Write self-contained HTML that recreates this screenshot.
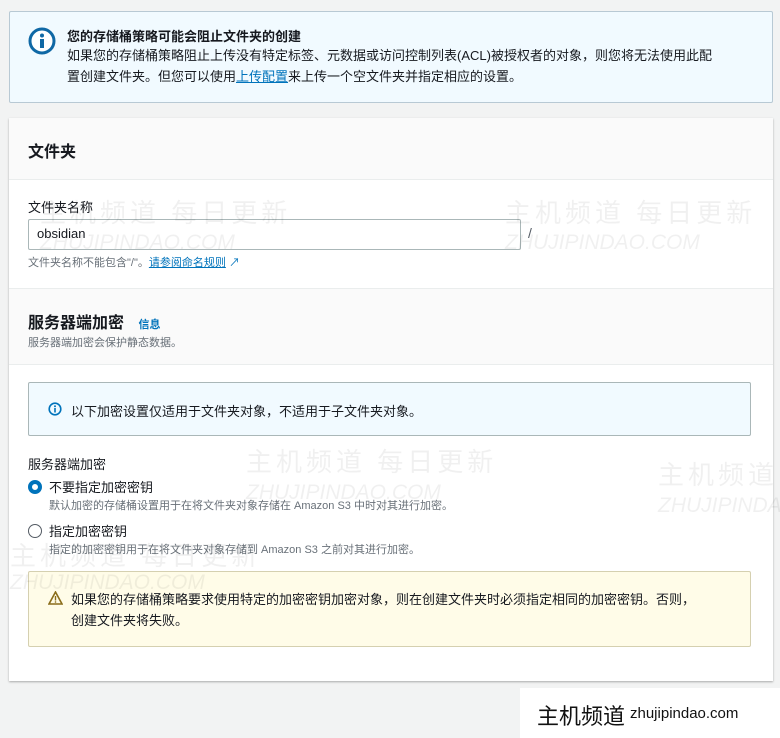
<!DOCTYPE html>
<html><head><meta charset="utf-8"><style>
*{box-sizing:border-box;margin:0;padding:0}
body{width:780px;height:738px;background:#f2f3f3;font-family:"Liberation Sans","Noto Sans CJK SC",sans-serif;color:#16191f;position:relative;overflow:hidden;font-size:13px}
.abs{position:absolute}
.info{left:9px;top:11px;width:764px;height:92px;background:#f1faff;border:1px solid #b8c9d4;border-radius:2px}
.card{left:9px;top:118px;width:764px;height:563px;background:#fff;box-shadow:0 1px 2px rgba(0,0,0,.3)}
.hd{position:absolute;left:0;width:764px;background:#fafafa;border-bottom:1px solid #eaeded}
a{color:#0073bb;text-decoration:underline}
.wm{position:absolute;color:rgba(0,0,0,.06);font-size:26px;letter-spacing:4px;white-space:nowrap}
.wm2{position:absolute;color:rgba(0,0,0,.06);font-style:italic;font-size:21px;white-space:nowrap}
</style></head><body>
<div class="abs info">
 <svg class="abs" style="left:17px;top:14px" width="30" height="30" viewBox="0 0 30 30"><circle cx="15" cy="15" r="12" fill="#fff" stroke="#0f68a5" stroke-width="3"/><circle cx="15" cy="9.5" r="2" fill="#0f68a5"/><rect x="13" y="13" width="4" height="9" fill="#0f68a5"/></svg>
 <div class="abs" style="left:57px;top:14px;font-weight:bold;font-size:13px">您的存储桶策略可能会阻止文件夹的创建</div>
 <div class="abs" style="left:57px;top:33px;width:654px;font-size:13px;line-height:21px">如果您的存储桶策略阻止上传没有特定标签、元数据或访问控制列表(ACL)被授权者的对象，则您将无法使用此配置创建文件夹。但您可以使用<a>上传配置</a>来上传一个空文件夹并指定相应的设置。</div>
</div>
<div class="abs card">
 <div class="hd" style="top:0;height:62px"><div class="abs" style="left:19px;top:20px;font-size:16px;font-weight:bold">文件夹</div></div>
 <div class="abs" style="left:19px;top:79px;font-size:13px">文件夹名称</div>
 <div class="abs" style="left:19px;top:101px;width:493px;height:31px;border:1px solid #aab7b8;border-radius:2px;padding:6px 8px;font-size:13px">obsidian</div>
 <div class="abs" style="left:519px;top:107px;font-size:14px;color:#545b64">/</div>
 <div class="abs" style="left:19px;top:136px;font-size:11px;color:#687078">文件夹名称不能包含"/"。<a>请参阅命名规则</a> <span style="color:#0073bb">&#x2197;</span></div>
 <div class="hd" style="top:170px;height:77px;border-top:1px solid #eaeded"><div class="abs" style="left:19px;top:20px;font-size:16px;font-weight:bold">服务器端加密 <span style="font-size:11px;color:#0073bb;margin-left:10px">信息</span></div><div class="abs" style="left:19px;top:45px;font-size:11px;color:#687078">服务器端加密会保护静态数据。</div></div>
 <div class="abs" style="left:19px;top:264px;width:723px;height:54px;background:#f1faff;border:1px solid #aab7b8;border-radius:2px">
  <svg class="abs" style="left:19px;top:19px" width="14" height="14" viewBox="0 0 14 14"><circle cx="7" cy="7" r="5.8" fill="none" stroke="#0073bb" stroke-width="1.6"/><rect x="6.2" y="6" width="1.6" height="4.5" fill="#0073bb"/><circle cx="7" cy="4.2" r="1" fill="#0073bb"/></svg>
  <div class="abs" style="left:42px;top:18px;font-size:13px">以下加密设置仅适用于文件夹对象，不适用于子文件夹对象。</div>
 </div>
 <div class="abs" style="left:19px;top:336px;font-size:13px">服务器端加密</div>
 <div class="abs" style="left:19px;top:362px;width:14px;height:14px;border-radius:50%;border:4px solid #0073bb"></div>
 <div class="abs" style="left:40px;top:359px;font-size:13px">不要指定加密密钥</div>
 <div class="abs" style="left:40px;top:379px;font-size:11px;color:#687078">默认加密的存储桶设置用于在将文件夹对象存储在 Amazon S3 中时对其进行加密。</div>
 <div class="abs" style="left:19px;top:406px;width:14px;height:14px;border-radius:50%;border:1.5px solid #545b64"></div>
 <div class="abs" style="left:40px;top:403px;font-size:13px">指定加密密钥</div>
 <div class="abs" style="left:40px;top:423px;font-size:11px;color:#687078">指定的加密密钥用于在将文件夹对象存储到 Amazon S3 之前对其进行加密。</div>
 <div class="abs" style="left:19px;top:453px;width:723px;height:76px;background:#fffce8;border:1px solid #d5d0b0;border-radius:2px">
  <svg class="abs" style="left:19px;top:19px" width="15" height="14" viewBox="0 0 15 14"><path d="M7.5 1L14 13H1Z" fill="none" stroke="#8a6d1a" stroke-width="1.6"/><rect x="6.8" y="5" width="1.4" height="4.5" fill="#8a6d1a"/><rect x="6.8" y="10.3" width="1.4" height="1.4" fill="#8a6d1a"/></svg>
  <div class="abs" style="left:42px;top:17px;width:670px;font-size:13px;line-height:21px">如果您的存储桶策略要求使用特定的加密密钥加密对象，则在创建文件夹时必须指定相同的加密密钥。否则，<br>创建文件夹将失败。</div>
 </div>
</div>
<div class="wm" style="left:40px;top:193px">主机频道 每日更新</div>
<div class="wm2" style="left:40px;top:231px">ZHUJIPINDAO.COM</div>
<div class="wm" style="left:505px;top:193px">主机频道 每日更新</div>
<div class="wm2" style="left:505px;top:231px">ZHUJIPINDAO.COM</div>
<div class="wm" style="left:246px;top:442px">主机频道 每日更新</div>
<div class="wm2" style="left:246px;top:481px">ZHUJIPINDAO.COM</div>
<div class="wm" style="left:658px;top:455px">主机频道 每</div>
<div class="wm2" style="left:658px;top:494px">ZHUJIPINDA</div>
<div class="wm" style="left:10px;top:536px">主机频道 每日更新</div>
<div class="wm2" style="left:10px;top:571px">ZHUJIPINDAO.COM</div>
<div class="abs" style="left:520px;top:688px;width:260px;height:50px;background:#fff">
 <div class="abs" style="left:17px;top:11px;font-size:22px;color:#111">主机频道</div>
 <div class="abs" style="left:110px;top:17px;font-size:15px;color:#111">zhujipindao.com</div>
</div>
</body></html>
